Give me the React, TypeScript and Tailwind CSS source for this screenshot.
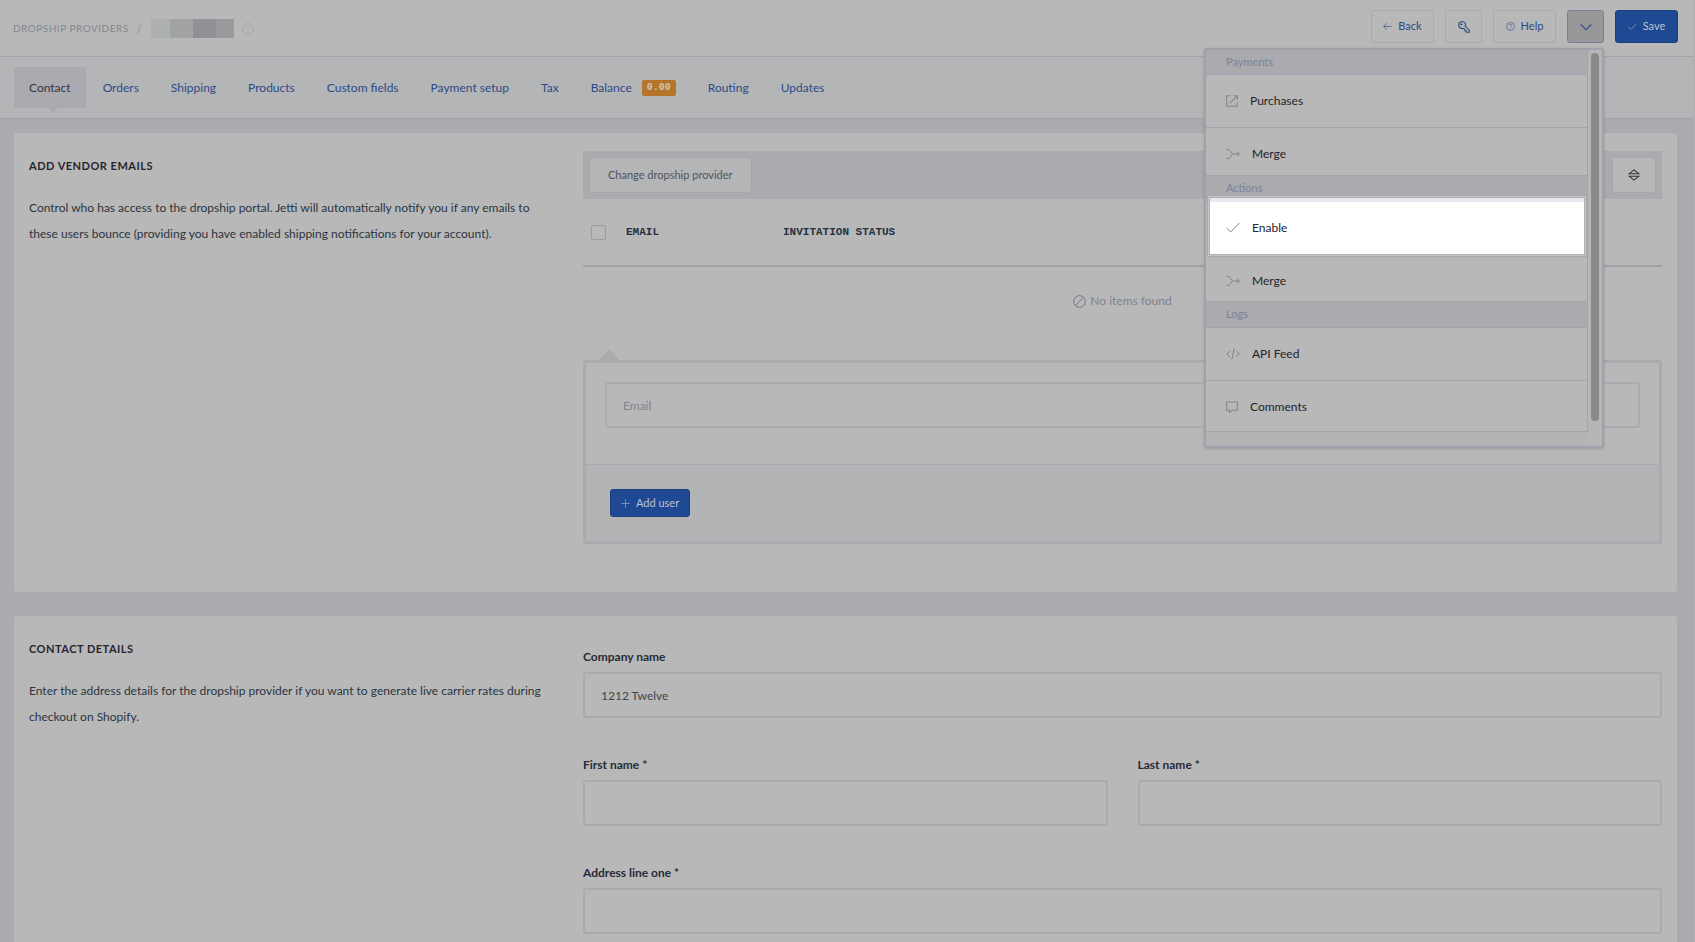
import type { ReactNode } from 'react'
import clsx from 'clsx'

const tabs = ['Contact', 'Orders', 'Shipping', 'Products', 'Custom fields', 'Payment setup', 'Tax', 'Balance', 'Routing', 'Updates']

function Icon({ size = 14, className, children }: { size?: number; className?: string; children: ReactNode }) {
  return (
    <svg
      width={size}
      height={size}
      viewBox="0 0 14 14"
      fill="none"
      stroke="currentColor"
      className={clsx('shrink-0', className)}
      aria-hidden="true"
    >
      {children}
    </svg>
  )
}

const icons = {
  external: <path strokeWidth="1.2" d="M5.5 1H.8v12.2H13V8.5M8.5.8h4.7v4.7M13 1L4.5 9.5" />,
  merge: <path d="M.5 2.5h2.5l3.5 4.5-3.5 4.5H.5M6.5 7h7M11 4.8L13.4 7 11 9.2" />,
  check: <path d="M.5 7L4.7 11 13.5 2" />,
  code: <path d="M3.8 4L1 7l2.8 3M10.2 4L13 7l-2.8 3M8.2 1.5L5.8 12.5" />,
  comment: <path strokeWidth="1.2" d="M.8 1.2h12.4v9.6H7.2L4 13.6v-2.8H.8z" />,
}

function HeaderButton({ label, className, children }: { label?: string; className?: string; children: ReactNode }) {
  return (
    <button
      type="button"
      aria-label={label}
      className={clsx('flex h-[33px] items-center justify-center gap-1.5 rounded-[3px] border text-[11px]', className)}
    >
      {children}
    </button>
  )
}

function MenuHeading({ className, children }: { className?: string; children: ReactNode }) {
  return (
    <div className={clsx('flex items-center border-b border-[#9ea2ac] bg-[#aaaaaf] pl-5 text-[11px] text-[#78839a]', className)}>
      {children}
    </div>
  )
}

type MenuItemProps = { icon: ReactNode; iconSize?: number; className: string; active?: boolean; children: ReactNode }

function MenuItem({ icon, iconSize, className, active, children }: MenuItemProps) {
  return (
    <button
      type="button"
      className={clsx('relative flex w-full items-start border-b border-[#a3a5ab] pt-[17px] pl-5 text-left text-[12px] leading-[18px] text-[#22242c]', className)}
    >
      {active && (
        <span className="absolute -top-1 right-[3px] bottom-0 left-1 border-t-4 border-[#e8e9f0] bg-white shadow-[0_0_0_1px_#b0b0b2,0_0_0_2px_#c6c6c6,0_0_0_3px_#a8a8ab]" />
      )}
      <span className="relative flex items-center gap-3">
        <Icon size={iconSize} className="text-[#7e8390]">{icon}</Icon>
        {children}
      </span>
    </button>
  )
}

function ActionsMenu() {
  return (
    <div className="absolute top-[38px] right-0 z-10 flex h-[400px] w-[400px] rounded-[3px] border-2 border-[#9fa2aa] bg-[#b4b4b5] shadow-[0_1px_3px_rgba(60,70,90,0.25)]">
      <div className="min-w-0 flex-1">
        <div className="border-r border-[#a3a5ab] bg-[#b8b8b8]">
          <MenuHeading className="h-[25px]">Payments</MenuHeading>
          <MenuItem icon={icons.external} iconSize={12} className="h-[53px]">Purchases</MenuItem>
          <MenuItem icon={icons.merge} className="h-[48px]">Merge</MenuItem>
          <MenuHeading className="h-[26px]">Actions</MenuHeading>
          <MenuItem icon={icons.check} className="h-[53px]" active>Enable</MenuItem>
          <MenuItem icon={icons.merge} className="h-[47px]">Merge</MenuItem>
          <MenuHeading className="h-[26px]">Logs</MenuHeading>
          <MenuItem icon={icons.code} className="h-[53px]">API Feed</MenuItem>
          <MenuItem icon={icons.comment} iconSize={12} className="h-[51px]">Comments</MenuItem>
        </div>
      </div>
      <div className="w-[14px] bg-[#b6b6b6] pt-[3px]">
        <div className="mx-[3px] h-[368px] rounded-full bg-[#8a8a8a]" />
      </div>
    </div>
  )
}

function Header() {
  return (
    <header className="flex h-[57px] items-start justify-between border-b border-[#a4a4a8] bg-[#b8b8b8] pr-[15px] pl-[13px]">
      <div className="flex h-[57px] items-center">
        <a href="#providers" className="text-[10px] tracking-[0.5px] text-[#83868e] uppercase">
          Dropship providers
        </a>
        <span className="ml-2 text-[13px] text-[#95979d]">/</span>
        <span className="ml-2 flex h-[19px]">
          <span className="w-[19px] bg-[#adb0b0]" />
          <span className="w-[23px] bg-[#a2a3a5]" />
          <span className="w-[23px] bg-[#8f9196]" />
          <span className="w-[18px] bg-[#989a9c]" />
        </span>
        <span className="ml-2 size-3 rounded-full border border-[#a6a8a8]" />
      </div>
      <div className="flex gap-[11px] pt-2.5">
        <HeaderButton className="w-[63px] border-[#a9aaaf] text-[#2c4a86]">
          <Icon size={9} className="text-[#4f669a]"><path strokeWidth="1.4" d="M13.5 7H1M6 2L1 7l5 5" /></Icon>
          Back
        </HeaderButton>
        <HeaderButton label="Access keys" className="w-[37px] border-[#a9aaaf] text-[#2c4a86]">
          <Icon size={12}>
            <path strokeWidth="1.2" d="M8.6 3.2a4 4 0 1 0-3.4 5.5l1.3-.2L8 10v1.5h1.6v1.7h3.6v-2.4L8.3 6c.5-.9.6-1.9.3-2.8z" />
            <circle cx="4" cy="4" r=".8" fill="currentColor" />
          </Icon>
        </HeaderButton>
        <HeaderButton className="w-[63px] border-[#a9aaaf] text-[#2c4a86]">
          <Icon size={9} className="text-[#4f669a]">
            <circle cx="7" cy="7" r="6.2" strokeWidth="1.2" />
            <path strokeWidth="1.2" d="M4.8 5.6c0-2.8 4.4-2.6 4.4-.2 0 1.5-2.2 1.5-2.2 3M7 9.8v1.4" />
          </Icon>
          Help
        </HeaderButton>
        <div className="relative">
          <HeaderButton label="More actions" className="w-[37px] border-[#777f9a] bg-[#989899] text-[#2c4a86]">
            <Icon size={12}><path strokeWidth="1.3" d="M.8 4L7 10.2 13.2 4" /></Icon>
          </HeaderButton>
          <ActionsMenu />
        </div>
        <HeaderButton className="w-[63px] border-[#1c3f80] bg-[#1f4993] text-[#bcc4d2]">
          <Icon size={9} className="text-[#8094bd]"><path strokeWidth="1.4" d="M.5 7.5L4.7 11.5 13.5 2.5" /></Icon>
          Save
        </HeaderButton>
      </div>
    </header>
  )
}

function Tabs() {
  return (
    <nav className="flex h-[62px] items-start gap-[2px] border-b border-[#a2a2a7] bg-[#b4b5b7] px-3.5 pt-2.5">
      {tabs.map((tab, i) => (
        <a
          key={tab}
          href={`#${tab.toLowerCase().replace(' ', '-')}`}
          className={clsx(
            'relative flex h-[41px] items-center rounded-[3px] px-[15px] text-[12px]',
            i === 0 ? 'bg-[#aaaaaf] text-[#35344a]' : 'text-[#2c4a86]',
          )}
        >
          {tab}
          {tab === 'Balance' && (
            <span className="ml-2.5 flex h-4 items-center rounded-[2px] bg-[#b4752b] px-[5px] font-['Liberation_Mono',monospace] text-[10px] font-bold text-[#cfc4b4]">
              0.00
            </span>
          )}
          {i === 0 && (
            <span className="absolute top-full left-[34px] border-x-[5px] border-t-[5px] border-x-transparent border-t-[#aaaaaf]" />
          )}
        </a>
      ))}
    </nav>
  )
}

function Section({ title, text, children }: { title: string; text: string; children: ReactNode }) {
  return (
    <section className="grid grid-cols-[554fr_1079fr] rounded-[3px] bg-[#b8b8b8] px-[15px]">
      <div className="pt-6 pr-10">
        <h2 className="text-[11px] leading-[18px] font-bold tracking-[0.5px] text-[#26262f] uppercase">{title}</h2>
        <p className="mt-5 text-[12px] leading-[26px] text-[#2b3440]">{text}</p>
      </div>
      {children}
    </section>
  )
}

function Field({ id, label, value }: { id: string; label: string; value?: string }) {
  return (
    <div className="flex-1">
      <label htmlFor={id} className="mb-1.5 block text-[12px] leading-[18px] font-bold text-[#262b38]">
        {label}
      </label>
      <input
        id={id}
        type="text"
        defaultValue={value}
        className="block h-[46px] w-full rounded-[3px] border-2 border-[#ababae] px-4 text-[12px] text-[#41454c] outline-none"
      />
    </div>
  )
}

function VendorEmails() {
  return (
    <div className="pt-[18px] pb-12">
      <div className="flex h-12 items-center justify-between bg-[#aaaaaf] px-1.5">
        <button type="button" className="h-9 rounded-[3px] border border-[#a5a6b2] bg-[#b4b5b7] px-[18px] text-[11px] text-[#50545c]">
          Change dropship provider
        </button>
        <button
          type="button"
          aria-label="Sort"
          className="flex h-9 w-11 items-center justify-center rounded-[3px] border border-[#a5a6b2] bg-[#b8b8b8] text-[#33363d]"
        >
          <Icon size={12}>
            <path strokeWidth="1.2" d="M1.2 5.6L7 1l5.8 4.6zM1.2 8.4L7 13l5.8-4.6z" />
          </Icon>
        </button>
      </div>
      <table className="w-full text-left">
        <thead>
          <tr className="h-[67px] border-b-2 border-[#a0a1a7] font-['Liberation_Mono',monospace] text-[11px] text-[#25313f] uppercase">
            <th className="w-[43px] pl-2">
              <input
                type="checkbox"
                aria-label="Select all"
                className="block size-[15px] appearance-none rounded-[2px] border border-[#9b9ca0]"
              />
            </th>
            <th className="w-[157px] font-bold">Email</th>
            <th className="font-bold">Invitation status</th>
          </tr>
        </thead>
        <tbody>
          <tr>
            <td colSpan={3} className="pt-[25px] pb-[39px] text-[12px] leading-[18px] text-[#7d8490]">
              <span className="flex items-center justify-center gap-1">
                <Icon size={13} className="text-[#6b727e]">
                  <circle cx="7" cy="7" r="6.3" />
                  <path d="M11.4 2.6l-8.8 8.8" />
                </Icon>
                No items found
              </span>
            </td>
          </tr>
        </tbody>
      </table>
      <div className="ml-4 h-0 w-0 border-x-[10px] border-b-[11px] border-x-transparent border-b-[#aaaaaf]" />
      <div className="rounded-[3px] border-[3px] border-[#aaaaaf]">
        <div className="px-[19px] pt-[19px] pb-9">
          <input
            type="email"
            aria-label="Email"
            placeholder="Email"
            className="block h-[46px] w-full rounded-[3px] border-2 border-[#aaaaaf] px-4 text-[12px] outline-none placeholder:text-[#7d8490]"
          />
        </div>
        <div className="border-t border-[#a9aaaf] bg-[#b3b4b6] px-6 py-6">
          <button type="button" className="flex h-7 items-center gap-1.5 rounded-[3px] border border-[#1c3f80] bg-[#1f4993] px-2.5 text-[11px] text-[#bcc4d2]">
            <Icon size={9} className="text-[#8094bd]"><path strokeWidth="1.4" d="M7 .5v13M.5 7h13" /></Icon>
            Add user
          </button>
        </div>
      </div>
    </div>
  )
}

export default function App() {
  return (
    <div className="min-h-screen border-r-2 border-[#b0b0b2] bg-[#aaaaaf] font-[Lato,sans-serif]">
      <Header />
      <Tabs />
      <main className="flex flex-col gap-6 py-3.5 pr-4 pl-3.5">
        <Section
          title="Add vendor emails"
          text="Control who has access to the dropship portal. Jetti will automatically notify you if any emails to these users bounce (providing you have enabled shipping notifications for your account)."
        >
          <VendorEmails />
        </Section>
        <Section
          title="Contact details"
          text="Enter the address details for the dropship provider if you want to generate live carrier rates during checkout on Shopify."
        >
          <form className="flex flex-col gap-[38px] pt-8 pb-10">
            <Field id="company" label="Company name" value="1212 Twelve" />
            <div className="flex gap-[30px]">
              <Field id="first-name" label="First name *" />
              <Field id="last-name" label="Last name *" />
            </div>
            <Field id="address-one" label="Address line one *" />
          </form>
        </Section>
      </main>
    </div>
  )
}
